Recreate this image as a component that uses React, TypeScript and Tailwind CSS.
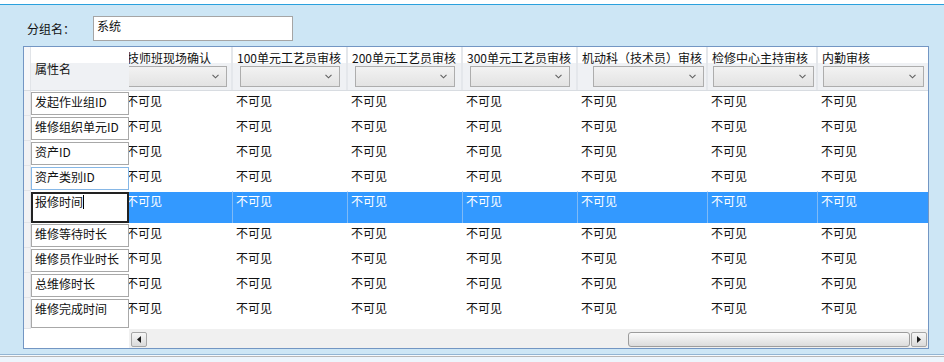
import React from 'react';

type Col = {
  title: string;
  cell: string;
  combo: string;
};

// column widths / combo placement, measured from the screen
const columns: Col[] = [
  { title: '技师班现场确认', cell: 'w-[110px]', combo: 'ml-[5px] w-[99px]' },
  { title: '100单元工艺员审核', cell: 'w-[115px]', combo: 'ml-[7px] w-[100px]' },
  { title: '200单元工艺员审核', cell: 'w-[115px]', combo: 'ml-[7px] w-[100px]' },
  { title: '300单元工艺员审核', cell: 'w-[115px]', combo: 'ml-[7px] w-[100px]' },
  { title: '机动科（技术员）审核', cell: 'w-[130px]', combo: 'ml-[15px] w-[111px]' },
  { title: '检修中心主持审核', cell: 'w-[110px]', combo: 'ml-[5px] w-[101px]' },
  { title: '内勤审核', cell: 'w-[120px]', combo: 'ml-[5px] w-[101px]' },
];

type Row = { name: string; h: string; box: string; selected?: boolean };

const rows: Row[] = [
  { name: '发起作业组ID', h: 'h-[25px]', box: 'h-[23px] border-[#a8a8a8]' },
  { name: '维修组织单元ID', h: 'h-[25px]', box: 'h-[23px] border-[#a8a8a8]' },
  { name: '资产ID', h: 'h-[25px]', box: 'h-[23px] border-[#a8a8a8]' },
  { name: '资产类别ID', h: 'h-[25px]', box: 'h-[23px] border-[#86b7e6]' },
  { name: '报修时间', h: 'h-[32px]', box: '', selected: true },
  { name: '维修等待时长', h: 'h-[25px]', box: 'h-[23px] border-[#a8a8a8]' },
  { name: '维修员作业时长', h: 'h-[25px]', box: 'h-[23px] border-[#a8a8a8]' },
  { name: '总维修时长', h: 'h-[25px]', box: 'h-[23px] border-[#a8a8a8]' },
  { name: '维修完成时间', h: 'h-[31px]', box: 'h-[29px] border-[#a8a8a8]' },
];

const Chevron = () => (
  <svg width="7" height="5" viewBox="0 0 7 5">
    <path d="M0.5 0.8 L3.5 3.8 L6.5 0.8" fill="none" stroke="#606060" strokeWidth="1.1" />
  </svg>
);

const ArrowLeft = () => (
  <svg width="4" height="7" viewBox="0 0 4 7">
    <path d="M4 0 L0 3.5 L4 7 Z" fill="#1a1a1a" />
  </svg>
);

const ArrowRight = () => (
  <svg width="4" height="7" viewBox="0 0 4 7">
    <path d="M0 0 L4 3.5 L0 7 Z" fill="#1a1a1a" />
  </svg>
);

const App: React.FC = () => {
  return (
    <div className="w-[944px] h-[362px] overflow-hidden bg-[#edf5fc] font-['Noto_Sans_CJK_SC',sans-serif] text-[12px] text-[#111]">
      <div className="h-[4px] bg-white" />
      <div className="h-[1px] bg-[#2aa0dd]" />

      <div className="h-[350px] bg-[#cde6f5] border-b border-[#93b5d3] pt-[11px]">
        {/* group name */}
        <div className="flex items-start pl-[27px]">
          <div className="w-[66px] pt-[5px] leading-[16px]">分组名：</div>
          <div className="w-[200px] h-[25px] border border-[#a5a5a5] bg-white pl-[3px] pt-[1px] leading-[16px]">
            系统
          </div>
        </div>

        {/* grid */}
        <div className="mt-[5px] ml-[23px] w-[906px] h-[303px] border border-[#7396c3] bg-white flex flex-col">
          {/* header */}
          <div className="flex h-[44px] border-b border-[#d8dce1]">
            <div className="w-[7px] bg-[#f6f7f9] border-r border-[#e1e4e8]" />
            <div className="w-[98px] flex items-center pl-[4px] pt-[1px] bg-[linear-gradient(to_bottom,#ffffff_0%,#ffffff_38%,#eff1f4_38%,#eff1f4_100%)]">
              属性名
            </div>
            <div className="w-[799px] overflow-hidden">
              <div className="flex ml-[-6px] w-[1000px] h-full">
                {columns.map((c) => (
                  <div
                    key={c.title}
                    className={`${c.cell} shrink-0 h-full border-r-2 border-[#e4e7eb] bg-[linear-gradient(to_bottom,#ffffff_0%,#ffffff_38%,#eff1f4_38%,#eff1f4_100%)]`}
                  >
                    <div className="pl-[4px] pt-[3px] leading-[16px] whitespace-nowrap">{c.title}</div>
                    <div
                      className={`${c.combo} h-[21px] border border-[#adadad] bg-linear-to-b from-[#f2f2f2] to-[#e3e3e3] flex items-center justify-end pr-[7px]`}
                    >
                      <Chevron />
                    </div>
                  </div>
                ))}
              </div>
            </div>
          </div>

          {/* rows */}
          {rows.map((r) => (
            <div key={r.name} className={`flex ${r.h}`}>
              <div className="w-[7px] bg-[#f1f2f4] border-r border-b border-[#e2e4e8]" />
              <div className="w-[98px]">
                {r.selected ? (
                  <div className="mt-[1px] h-[31px] border-2 border-[#222] leading-[15px] pl-[2px] flex items-start">
                    <span>{r.name}</span>
                    <span className="mt-[1px] w-[1px] h-[14px] bg-black" />
                  </div>
                ) : (
                  <div className={`mt-[1px] ${r.box} border bg-white pl-[3px] pt-[1px] leading-[16px] whitespace-nowrap`}>
                    {r.name}
                  </div>
                )}
              </div>
              <div className="w-[799px] overflow-hidden">
                <div className="flex ml-[-6px] w-[1000px] h-full">
                  {columns.map((c) =>
                    r.selected ? (
                      <div
                        key={c.title}
                        className={`${c.cell} shrink-0 h-full border-t border-t-white border-r border-r-[#7fbaf6] bg-[#3399ff] text-white pl-[3px] pt-[1px] leading-[16px]`}
                      >
                        不可见
                      </div>
                    ) : (
                      <div
                        key={c.title}
                        className={`${c.cell} shrink-0 h-full border-r border-white pl-[3px] pt-[2px] leading-[16px]`}
                      >
                        不可见
                      </div>
                    )
                  )}
                </div>
              </div>
            </div>
          ))}

          {/* horizontal scrollbar */}
          <div className="flex h-[19px]">
            <div className="w-[105px] bg-white" />
            <div className="w-[799px] bg-[#f0f0f0] flex items-start pt-[3px] pl-[2px]">
              <div className="w-[16px] h-[15px] rounded-[2px] border border-[#a6a6a6] bg-linear-to-b from-[#f6f6f6] to-[#dadada] flex items-center justify-center">
                <ArrowLeft />
              </div>
              <div className="ml-[481px] w-[282px] h-[15px] rounded-[3px] border border-[#9c9c9c] bg-linear-to-b from-[#fafafa] to-[#dcdcdc]" />
              <div className="ml-[1px] w-[16px] h-[15px] rounded-[2px] border border-[#a6a6a6] bg-linear-to-b from-[#f6f6f6] to-[#dadada] flex items-center justify-center">
                <ArrowRight />
              </div>
            </div>
          </div>
        </div>
      </div>

      <div className="h-[1px] bg-[#f6fafd]" />
      <div className="h-[1px] bg-[#b7b7b7]" />
    </div>
  );
};

export default App;
